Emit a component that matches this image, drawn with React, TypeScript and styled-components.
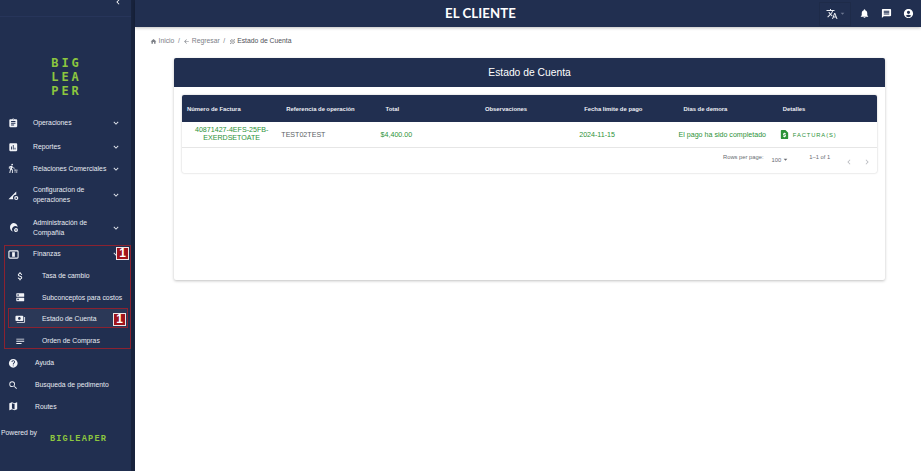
import React from "react";
import styled, { createGlobalStyle } from "styled-components";
import {
  MdAssignment, MdAssessment, MdTransferWithinAStation,
  MdAttachMoney, MdDns, MdPayments, MdNotes, MdHelp, MdSearch, MdMap, MdExpandMore, MdChevronLeft,
  MdChevronRight, MdTranslate, MdArrowDropDown, MdNotifications, MdMessage, MdAccountCircle,
  MdHome, MdArrowBack, MdGrain, MdRequestPage,
} from "react-icons/md";

const NAVY = "#212f50";
const GREEN = "#2c9238";

const Global = createGlobalStyle`
  html, body { margin: 0; padding: 0; background: #fff; }
  body { font-family: "Liberation Sans", Arial, sans-serif; width: 921px; height: 471px; overflow: hidden; }
  * { box-sizing: border-box; }
`;

const Page = styled.div`display: flex; width: 921px; height: 471px;`;
const Sidebar = styled.aside`
  position: relative; width: 135px; height: 471px; flex: none; background: ${NAVY};
  border-right: 4px solid #18233d; color: #e6e9f0; display: flex; flex-direction: column;
`;
const CollapseBar = styled.div`
  height: 17px; display: flex; justify-content: flex-end; align-items: flex-start; padding-right: 8px;
  border-bottom: 1px solid #27355a; color: #fff; line-height: 0;
  svg { margin-top: -3px; }
`;
const Logo = styled.div`
  height: 94px; padding-top: 39px; display: flex; flex-direction: column; align-items: center;
  font: 700 12px/14px "DejaVu Sans Mono", monospace; letter-spacing: 3px; color: #8cc63f;
  span { height: 14px; padding-left: 2px; }
`;
const Nav = styled.nav`display: flex; flex-direction: column;`;
const Item = styled.div<{ $h: number; $sub?: boolean }>`
  height: ${(p) => p.$h}px; display: flex; align-items: center; position: relative;
  padding-left: ${(p) => (p.$sub ? 15 : 8)}px; color: #e8ebf2; font-size: 6.8px; line-height: 10px;
`;
const ItemIcon = styled.span<{ $w?: number }>`
  width: ${(p) => p.$w ?? 25}px; flex: none; display: flex; font-size: 10.5px; color: #f2f4f8;
`;
const Label = styled.span<{ $wide?: boolean }>`
  flex: 1; max-width: ${(p) => (p.$wide ? 95 : 78)}px; white-space: ${(p) => (p.$wide ? "nowrap" : "normal")}; z-index: 1;
`;
const Chevron = styled.span`position: absolute; left: 111px; top: 50%; margin-top: -5px; display: flex; font-size: 10px; color: #e8ebf2;`;
const ActiveRow = styled.div`
  position: absolute; left: 10px; top: 309px; width: 118px; height: 18px; background: #2b3857; z-index: 0;
`;
const RedBox = styled.div<{ $l: number; $t: number; $w: number; $h: number }>`
  position: absolute; left: ${(p) => p.$l}px; top: ${(p) => p.$t}px; width: ${(p) => p.$w}px; height: ${(p) => p.$h}px;
  border: 1.5px solid #8b2230; z-index: 2;
`;
const Badge = styled.div<{ $l: number; $t: number }>`
  position: absolute; left: ${(p) => p.$l}px; top: ${(p) => p.$t}px; width: 13px; height: 13px; background: #a0141c;
  border: 1px solid #efe6e6; color: #fff; font: 700 12px/11px "Liberation Sans", sans-serif; text-align: center; z-index: 3;
`;
const Powered = styled.div`display: flex; height: 30px; padding-top: 11px; font-size: 6.8px; color: #e8ebf2; padding-left: 1px;`;
const PoweredLogo = styled.span`
  margin-left: 13px; margin-top: 5px; font: 700 8.6px/10px "Liberation Mono", monospace; letter-spacing: 1.2px; color: #8cc63f;
`;

const Main = styled.main`flex: 1; min-width: 0; display: flex; flex-direction: column;`;
const TopBar = styled.header`
  height: 27px; flex: none; background: ${NAVY}; display: flex; align-items: center; position: relative; box-shadow: 0 1px 3px rgba(0,0,0,.25);
`;
const Brand = styled.div`
  position: absolute; left: 310px; top: 0; color: #fff; font: 700 13.2px/27px Lato, sans-serif; letter-spacing: 0.1px;
`;
const TopActions = styled.div`margin-left: auto; display: flex; align-items: center; padding-right: 7px; color: #fff;`;
const Lang = styled.div`
  width: 32px; height: 24px; display: flex; align-items: center; padding-left: 6px;
  border: 1px solid #1e2b49; font-size: 12px; color: #eef0f5; margin-right: 8px;
  svg + svg { font-size: 9px; color: #6b7690; }
`;
const TopIcon = styled.span`display: flex; width: 11px; font-size: 11px; margin-right: 11px; &:last-child { margin-right: 0; }`;
const Crumbs = styled.div`
  height: 31px; padding: 0 0 3px 15px; display: flex; align-items: center; gap: 2.5px; font-size: 6.8px; color: #7d8087; line-height: 10px;
  svg { font-size: 7px; }
`;
const Crumb = styled.span<{ $on?: boolean }>`display: flex; align-items: center; gap: 1.5px; color: ${(p) => (p.$on ? "#4f5258" : "#7d8087")};`;
const Sep = styled.span`margin: 0 1px;`;

const Card = styled.section`
  width: 711px; height: 222px; margin-left: 39px; background: #fff; border-radius: 2px; box-shadow: 0 1px 3px rgba(0,0,0,.25);
  display: flex; flex-direction: column;
`;
const CardHead = styled.div`
  height: 29px; background: ${NAVY}; color: #fff; text-align: center; font-size: 10.3px; line-height: 29px; border-radius: 2px 2px 0 0;
`;
const CardBody = styled.div`padding: 8px 8px 0;`;
const TablePanel = styled.div`border-radius: 2px; box-shadow: 0 0 2px rgba(0,0,0,.25); height: 78px;`;
const Cols = styled.div`display: grid; grid-template-columns: repeat(7, 99.3px);`;
const Head = styled(Cols)`height: 27px; background: ${NAVY}; color: #eef0f5; font-weight: 700; font-size: 5.9px; align-items: center; border-radius: 2px 2px 0 0;`;
const HeadCell = styled.div`padding-left: 5px; white-space: nowrap;`;
const Row = styled(Cols)`height: 26px; align-items: center; border-bottom: 1px solid #e6e6e6; color: ${GREEN}; font-size: 7.1px;`;
const InvoiceCell = styled.div`text-align: center; line-height: 7.4px;`;
const Cell = styled.div<{ $muted?: boolean }>`
  color: ${(p) => (p.$muted ? "#5c5f66" : GREEN)}; white-space: nowrap;
`;
const FacturaBtn = styled.div`
  display: flex; align-items: center; margin-left: 1px; gap: 3px; color: ${GREEN}; font-size: 5.8px; letter-spacing: 0.9px;
  svg { font-size: 11px; color: ${GREEN}; }
`;
const Foot = styled.div`height: 25px; display: flex; align-items: flex-start; color: #686b72; font-size: 5.8px; padding-left: 541px; padding-top: 6px;`;
const Select = styled.span`display: flex; align-items: center; margin: 1px 0 0 8px; svg { font-size: 9px; }`;
const Count = styled.span`margin-left: 19px;`;
const Pager = styled.span`display: flex; gap: 8px; margin: 3px 0 0 14px; font-size: 10px; color: #b9bbc0;`;

const RulerGear = () => (
  <svg width="11" height="11" viewBox="0 0 24 24" fill="currentColor">
    <path d="M1 20 L18 3 V10.5 A6.5 6.5 0 0 0 11.5 20 Z" />
    <circle cx="18" cy="17.5" r="3.2" fill="none" stroke="currentColor" strokeWidth="2.6" />
  </svg>
);
const BlobGear = () => (
  <svg width="11" height="11" viewBox="0 0 24 24" fill="currentColor">
    <path d="M11 2 A10 10 0 0 1 21 11 A7 7 0 0 0 11 20.8 A10 10 0 0 1 11 2 Z" />
    <circle cx="17.5" cy="17.5" r="3" fill="none" stroke="currentColor" strokeWidth="2.6" />
  </svg>
);
const MoneyFrame = () => (
  <svg width="11" height="11" viewBox="0 0 24 24" fill="currentColor">
    <rect x="2" y="4" width="20" height="16" rx="2" fill="none" stroke="currentColor" strokeWidth="2.4" />
    <rect x="9" y="7" width="6" height="10" />
  </svg>
);

const items = [
  { icon: <MdAssignment />, label: "Operaciones", h: 24 },
  { icon: <MdAssessment />, label: "Reportes", h: 24 },
  { icon: <MdTransferWithinAStation />, label: "Relaciones Comerciales", h: 19, wide: true },
  { icon: <RulerGear />, label: "Configuracion de operaciones", h: 34 },
  { icon: <BlobGear />, label: "Administración de Compañía", h: 31 },
  { icon: <MoneyFrame />, label: "Finanzas", h: 22 },
];
const subs = [
  { icon: <MdAttachMoney />, label: "Tasa de cambio" },
  { icon: <MdDns />, label: "Subconceptos para costos" },
  { icon: <MdPayments />, label: "Estado de Cuenta" },
  { icon: <MdNotes />, label: "Orden de Compras" },
];
const extra = [
  { icon: <MdHelp />, label: "Ayuda" },
  { icon: <MdSearch />, label: "Busqueda de pedimento" },
  { icon: <MdMap />, label: "Routes" },
];

export default function App() {
  return (
    <Page>
      <Global />
      <Sidebar>
        <ActiveRow />
        <CollapseBar><MdChevronLeft size={10} /></CollapseBar>
        <Logo><span>BIG</span><span>LEA</span><span>PER</span></Logo>
        <Nav>
          {items.map((it) => (
            <Item key={it.label} $h={it.h}>
              <ItemIcon>{it.icon}</ItemIcon>
              <Label $wide={it.wide}>{it.label}</Label>
              <Chevron><MdExpandMore /></Chevron>
            </Item>
          ))}
          {subs.map((it) => (
            <Item key={it.label} $h={21.8} $sub>
              <ItemIcon $w={27}>{it.icon}</ItemIcon>
              <Label $wide>{it.label}</Label>
            </Item>
          ))}
          {extra.map((it) => (
            <Item key={it.label} $h={21.8}>
              <ItemIcon $w={27}>{it.icon}</ItemIcon>
              <Label $wide>{it.label}</Label>
            </Item>
          ))}
        </Nav>
        <Powered>Powered by<PoweredLogo>BIGLEAPER</PoweredLogo></Powered>
        <RedBox $l={4} $t={245} $w={127} $h={104} />
        <RedBox $l={8} $t={308} $w={120} $h={20} />
        <Badge $l={116} $t={247}>1</Badge>
        <Badge $l={113} $t={313}>1</Badge>
      </Sidebar>
      <Main>
        <TopBar>
          <Brand>EL CLIENTE</Brand>
          <TopActions>
            <Lang><MdTranslate /><MdArrowDropDown /></Lang>
            <TopIcon><MdNotifications /></TopIcon>
            <TopIcon><MdMessage /></TopIcon>
            <TopIcon><MdAccountCircle /></TopIcon>
          </TopActions>
        </TopBar>
        <Crumbs>
          <Crumb><MdHome />Inicio</Crumb><Sep>/</Sep>
          <Crumb><MdArrowBack />Regresar</Crumb><Sep>/</Sep>
          <Crumb $on><MdGrain />Estado de Cuenta</Crumb>
        </Crumbs>
        <Card>
          <CardHead>Estado de Cuenta</CardHead>
          <CardBody>
            <TablePanel>
              <Head>
                <HeadCell>Número de Factura</HeadCell>
                <HeadCell>Referencia de operación</HeadCell>
                <HeadCell>Total</HeadCell>
                <HeadCell>Observaciones</HeadCell>
                <HeadCell>Fecha limite de pago</HeadCell>
                <HeadCell>Dias de demora</HeadCell>
                <HeadCell>Detalles</HeadCell>
              </Head>
              <Row>
                <InvoiceCell>40871427-4EFS-25FB-<br />EXERDSETOATE</InvoiceCell>
                <Cell $muted>TEST02TEST</Cell>
                <Cell>$4,400.00</Cell>
                <Cell />
                <Cell>2024-11-15</Cell>
                <Cell>El pago ha sido completado</Cell>
                <FacturaBtn><MdRequestPage />FACTURA(S)</FacturaBtn>
              </Row>
              <Foot>
                <span>Rows per page:</span>
                <Select>100<MdArrowDropDown /></Select>
                <Count>1–1 of 1</Count>
                <Pager><MdChevronLeft /><MdChevronRight /></Pager>
              </Foot>
            </TablePanel>
          </CardBody>
        </Card>
      </Main>
    </Page>
  );
}
